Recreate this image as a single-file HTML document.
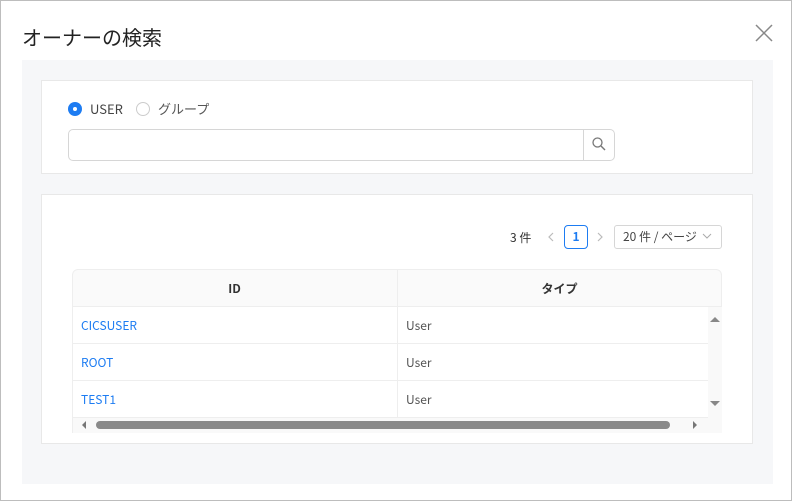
<!DOCTYPE html>
<html><head><meta charset="utf-8"><style>
*{box-sizing:border-box;margin:0;padding:0}
body{width:792px;height:501px;position:relative;background:#fff;font-family:"Noto Sans CJK JP","Liberation Sans",sans-serif;color:#333;overflow:hidden}
.a{position:absolute}
</style></head><body>
<div class="a" style="left:0;top:0;width:792px;height:501px;border:1px solid #bdbdbd"></div>
<div class="a" style="left:22px;top:22px;font-size:20px;color:#222;line-height:30px">オーナーの検索</div>
<svg class="a" style="left:755px;top:24px" width="18" height="18"><path d="M1 1L17 17M17 1L1 17" stroke="#888" stroke-width="1.5"/></svg>
<div class="a" style="left:22px;top:60px;width:751px;height:424px;background:#f6f7f9"></div>
<div class="a" style="left:41px;top:80px;width:712px;height:94px;background:#fff;border:1px solid #e8e8e8"></div>
<div class="a" style="left:68px;top:102px;width:14px;height:14px;border-radius:50%;background:#1d7cf2"></div>
<div class="a" style="left:73px;top:107px;width:4px;height:4px;border-radius:50%;background:#fff"></div>
<div class="a" style="left:90px;top:100px;font-size:13px;color:#444;line-height:18px">USER</div>
<div class="a" style="left:136px;top:102px;width:14px;height:14px;border-radius:50%;border:1px solid #ccc"></div>
<div class="a" style="left:158px;top:100px;font-size:13px;color:#555;line-height:18px">グループ</div>
<div class="a" style="left:68px;top:129px;width:547px;height:32px;border:1px solid #d6d6d6;border-radius:5px"></div>
<div class="a" style="left:583px;top:129px;width:1px;height:32px;background:#d6d6d6"></div>
<svg class="a" style="left:591px;top:136px" width="16" height="16"><circle cx="6.5" cy="6.5" r="4.5" fill="none" stroke="#777" stroke-width="1.3"/><path d="M10 10L14 14" stroke="#777" stroke-width="1.4"/></svg>
<div class="a" style="left:41px;top:194px;width:712px;height:250px;background:#fff;border:1px solid #e8e8e8"></div>
<div class="a" style="left:510px;top:229px;font-size:12px;color:#333;line-height:18px">3 件</div>
<svg class="a" style="left:547px;top:232px" width="8" height="10"><path d="M6 1L2 5L6 9" fill="none" stroke="#bbb" stroke-width="1.2"/></svg>
<div class="a" style="left:564px;top:225px;width:24px;height:24px;border:1px solid #1d7cf2;border-radius:4px;color:#1d7cf2;font-size:12px;font-weight:bold;text-align:center;line-height:22px">1</div>
<svg class="a" style="left:596px;top:232px" width="8" height="10"><path d="M2 1L6 5L2 9" fill="none" stroke="#bbb" stroke-width="1.2"/></svg>
<div class="a" style="left:614px;top:225px;width:108px;height:24px;border:1px solid #d6d6d6;border-radius:3px;font-size:12px;color:#444;line-height:22px;padding-left:8px">20 件 / ページ</div>
<svg class="a" style="left:702px;top:233px" width="10" height="7"><path d="M1 1L5 5L9 1" fill="none" stroke="#aaa" stroke-width="1"/></svg>
<div class="a" style="left:72px;top:269px;width:650px;height:38px;background:#fafafa;border:1px solid #eee;border-radius:6px 6px 0 0"></div>
<div class="a" style="left:397px;top:270px;width:1px;height:148px;background:#eee"></div>
<div class="a" style="left:72px;top:280px;width:325px;text-align:center;font-size:12px;font-weight:bold;line-height:18px">ID</div>
<div class="a" style="left:397px;top:280px;width:325px;text-align:center;font-size:12px;font-weight:bold;line-height:18px">タイプ</div>
<div class="a" style="left:72px;top:307px;width:1px;height:126px;background:#eee"></div>
<div class="a" style="left:708px;top:307px;width:14px;height:126px;background:#f9f9f9"></div>
<div class="a" style="left:72px;top:343px;width:636px;height:1px;background:#eee"></div>
<div class="a" style="left:72px;top:380px;width:636px;height:1px;background:#eee"></div>
<div class="a" style="left:72px;top:417px;width:636px;height:1px;background:#eee"></div>
<div class="a" style="left:81px;top:317px;font-size:12px;color:#1d7cf2;line-height:18px">CICSUSER</div>
<div class="a" style="left:81px;top:354px;font-size:12px;color:#1d7cf2;line-height:18px">ROOT</div>
<div class="a" style="left:81px;top:391px;font-size:12px;color:#1d7cf2;line-height:18px">TEST1</div>
<div class="a" style="left:406px;top:317px;font-size:12px;color:#555;line-height:18px">User</div>
<div class="a" style="left:406px;top:354px;font-size:12px;color:#555;line-height:18px">User</div>
<div class="a" style="left:406px;top:391px;font-size:12px;color:#555;line-height:18px">User</div>
<div class="a" style="left:73px;top:418px;width:635px;height:15px;background:#f9f9f9"></div>
<svg class="a" style="left:80px;top:420px" width="8" height="10"><path d="M6 1L2 5L6 9Z" fill="#777"/></svg>
<div class="a" style="left:96px;top:421px;width:574px;height:8px;border-radius:4px;background:#8a8a8a"></div>
<svg class="a" style="left:691px;top:420px" width="8" height="10"><path d="M2 1L6 5L2 9Z" fill="#777"/></svg>
<svg class="a" style="left:709px;top:315px" width="12" height="8"><path d="M1 7L6 2L11 7Z" fill="#888"/></svg>
<svg class="a" style="left:709px;top:400px" width="12" height="8"><path d="M1 1L6 6L11 1Z" fill="#888"/></svg>
</body></html>
